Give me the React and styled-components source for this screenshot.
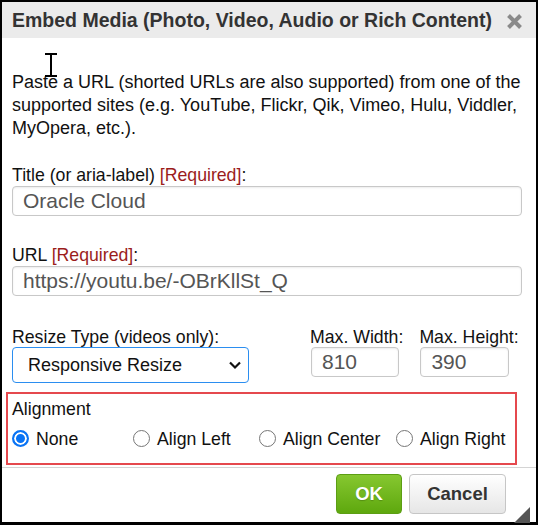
import React from "react";
import styled, { createGlobalStyle } from "styled-components";

const Global = createGlobalStyle`
  html, body {
    margin: 0;
    padding: 0;
    background: #fff;
  }
  * {
    box-sizing: border-box;
  }
`;

const App = () => {
  return (
    <>
      <Global />
      <Dialog>
        <Header>
          <Title>Embed Media (Photo, Video, Audio or Rich Content)</Title>
          <Close aria-label="Close">
            <svg width="17" height="17" viewBox="0 0 17 17">
              <path d="M2.5 2.5 L14.5 14.5 M14.5 2.5 L2.5 14.5" stroke="#8a8a8a" strokeWidth="4" strokeLinecap="butt" />
            </svg>
          </Close>
        </Header>
        <Body>
          <Intro>
            Paste a URL (shorted URLs are also supported) from one of the supported sites (e.g. YouTube, Flickr, Qik, Vimeo, Hulu, Viddler, MyOpera, etc.).
          </Intro>

          <Field $mt="25px">
            <Label>
              Title (or aria-label) <Req>[Required]</Req>:
            </Label>
            <TextBox>Oracle Cloud</TextBox>
          </Field>

          <Field $mt="29px">
            <Label>
              URL <Req>[Required]</Req>:
            </Label>
            <TextBox>https://youtu.be/-OBrKllSt_Q</TextBox>
          </Field>

          <SizeRow>
            <Col>
              <Label>Resize Type (videos only):</Label>
              <Select>
                <span>Responsive Resize</span>
                <svg width="14" height="10" viewBox="0 0 14 10">
                  <path d="M2 2.5 L7 7.5 L12 2.5" fill="none" stroke="#111" strokeWidth="2.2" />
                </svg>
              </Select>
            </Col>
            <Col $ml="61px">
              <Label>Max. Width:</Label>
              <SmallBox $w="88px">810</SmallBox>
            </Col>
            <Col $ml="16px">
              <Label>Max. Height:</Label>
              <SmallBox $w="89px">390</SmallBox>
            </Col>
          </SizeRow>

          <AlignBox>
            <AlignLabel>Alignment</AlignLabel>
            <Radios>
              <Option $w="121px">
                <Radio $checked />
                None
              </Option>
              <Option $w="126px">
                <Radio />
                Align Left
              </Option>
              <Option $w="137px">
                <Radio />
                Align Center
              </Option>
              <Option>
                <Radio />
                Align Right
              </Option>
            </Radios>
          </AlignBox>
        </Body>
        <Footer>
          <OkButton>OK</OkButton>
          <CancelButton>Cancel</CancelButton>
          <Grip />
        </Footer>
        <Cursor>
          <svg width="14" height="24" viewBox="0 0 14 24">
            <path d="M1 1 H13 M7 1 V23 M1 23 H13" stroke="#000" strokeWidth="2" fill="none" />
          </svg>
        </Cursor>
      </Dialog>
    </>
  );
};

export default App;

const Dialog = styled.div`
  position: relative;
  width: 538px;
  height: 525px;
  border: 2px solid #000;
  border-bottom-width: 3px;
  background: #fff;
  display: flex;
  flex-direction: column;
  font-family: Arial, "Liberation Sans", sans-serif;
  color: #111;
`;
const Header = styled.div`
  height: 36px;
  background: #ebebeb;
  display: flex;
  align-items: center;
  justify-content: space-between;
  padding: 0 13px 0 10px;
`;
const Title = styled.div`
  font-weight: bold;
  font-size: 19.5px;
  color: #333;
  white-space: nowrap;
`;
const Close = styled.div`
  display: flex;
  align-items: center;
  margin-top: 2px;
`;
const Body = styled.div`
  padding: 0 10px;
  display: flex;
  flex-direction: column;
`;
const Intro = styled.p`
  margin: 33px 0 0 0;
  font-size: 18px;
  line-height: 23px;
  color: #111;
`;
const Field = styled.div`
  display: flex;
  flex-direction: column;
  margin-top: ${(p) => p.$mt || "0"};
`;
const Label = styled.div`
  font-size: 17.7px;
  line-height: 20px;
  color: #111;
  white-space: nowrap;
`;
const Req = styled.span`
  color: #9b1c1c;
`;
const TextBox = styled.div`
  margin-top: 1px;
  height: 30px;
  width: 510px;
  border: 1px solid #c8c8c8;
  border-radius: 4px;
  box-shadow: inset 0 1px 2px rgba(0, 0, 0, 0.08);
  padding: 0 10px;
  font-size: 21px;
  line-height: 28px;
  color: #555;
`;
const SizeRow = styled.div`
  display: flex;
  align-items: flex-start;
  margin-top: 31px;
`;
const Col = styled.div`
  display: flex;
  flex-direction: column;
  margin-left: ${(p) => p.$ml || "0"};
`;
const Select = styled.div`
  width: 237px;
  height: 36px;
  border: 1px solid #2b8ef0;
  border-radius: 4px;
  display: flex;
  align-items: center;
  justify-content: space-between;
  padding: 0 6px 0 15px;
  font-size: 18px;
  color: #111;
`;
const SmallBox = styled.div`
  width: ${(p) => p.$w};
  height: 30px;
  border: 1px solid #c8c8c8;
  border-radius: 4px;
  box-shadow: inset 0 1px 2px rgba(0, 0, 0, 0.08);
  padding: 0 10px;
  font-size: 21px;
  line-height: 28px;
  color: #555;
  margin-left: 1px;
`;
const AlignBox = styled.div`
  margin: 9px 0 0 -6px;
  width: 511px;
  height: 73px;
  border: 2px solid #e5484d;
  padding: 4px 4px 0 4px;
`;
const AlignLabel = styled.div`
  font-size: 17.7px;
  line-height: 22px;
  color: #111;
`;
const Radios = styled.div`
  display: flex;
  align-items: center;
  margin-top: 9px;
`;
const Option = styled.label`
  display: flex;
  align-items: center;
  width: ${(p) => p.$w || "auto"};
  font-size: 17.7px;
  color: #111;
  gap: 7px;
`;
const Radio = styled.span`
  width: 17px;
  height: 17px;
  border-radius: 50%;
  flex-shrink: 0;
  margin-top: -3px;
  border: ${(p) => (p.$checked ? "2px solid #0a74f5" : "1px solid #767676")};
  background: ${(p) => (p.$checked ? "#0a74f5" : "#fff")};
  box-shadow: ${(p) => (p.$checked ? "inset 0 0 0 2px #fff" : "none")};
`;
const Footer = styled.div`
  position: relative;
  margin-top: 2px;
  border-top: 1px solid #d4d4d4;
  display: flex;
  justify-content: flex-end;
  gap: 7px;
  padding: 6px 30px 0 0;
`;
const ButtonBase = styled.button`
  height: 40px;
  border-radius: 4px;
  font-family: Arial, "Liberation Sans", sans-serif;
  font-weight: bold;
  font-size: 18.5px;
  cursor: pointer;
`;
const OkButton = styled(ButtonBase)`
  width: 66px;
  color: #fff;
  background: linear-gradient(#86c730, #5ea80e);
  border: 1px solid #5c9e14;
  text-shadow: 0 1px 1px rgba(0, 0, 0, 0.2);
`;
const CancelButton = styled(ButtonBase)`
  width: 97px;
  color: #333;
  background: linear-gradient(#ffffff, #e6e6e6);
  border: 1px solid #c6c6c6;
`;
const Grip = styled.div`
  position: absolute;
  right: 6px;
  bottom: -9px;
  width: 0;
  height: 0;
  border-left: 16px solid transparent;
  border-bottom: 16px solid #555;
`;
const Cursor = styled.div`
  position: absolute;
  left: 42px;
  top: 51px;
  line-height: 0;
`;
